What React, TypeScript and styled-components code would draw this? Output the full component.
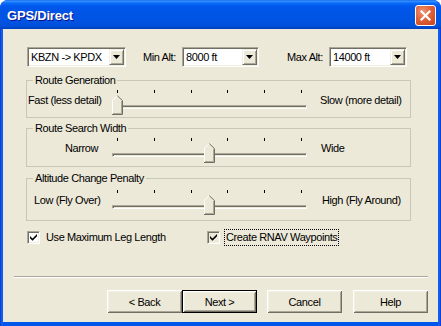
import React from "react";
import styled, { createGlobalStyle } from "styled-components";

const GlobalStyle = createGlobalStyle`
  html, body {
    margin: 0;
    padding: 0;
    background: #ffffff;
  }
  body {
    font-family: "Liberation Sans", Arial, sans-serif;
    font-size: 11px;
    letter-spacing: -0.4px;
    color: #000;
  }
`;

const Window = styled.div`
  width: 441px;
  height: 326px;
  display: flex;
  flex-direction: column;
  background: linear-gradient(to right, #0831d9 0, #166aee 2px, #0055ea 3px, #0055ea 438px, #166aee 439px, #0831d9 441px);
  border-radius: 8px 8px 0 0;
  overflow: hidden;
`;

const TitleBar = styled.div`
  height: 29px;
  flex: none;
  display: flex;
  align-items: flex-start;
  justify-content: space-between;
  padding: 5px 5px 0 7px;
  box-sizing: border-box;
  background: linear-gradient(
    to bottom,
    #0a5fe9 0,
    #3d95ff 1px,
    #0a6df9 3px,
    #0058ee 6px,
    #0055e5 12px,
    #0054e3 20px,
    #0050da 26px,
    #0040be 29px
  );
`;

const Title = styled.span`
  font-weight: bold;
  font-size: 13px;
  letter-spacing: -0.2px;
  line-height: 21px;
  color: #fff;
  text-shadow: 1px 1px #0f1089;
`;

const CloseBtn = styled.div`
  width: 21px;
  height: 21px;
  box-sizing: border-box;
  border: 1px solid #fff;
  border-radius: 3px;
  background: radial-gradient(circle at 35% 30%, #ef9474 0, #e0633c 45%, #c8401a 100%);
  display: flex;
  align-items: center;
  justify-content: center;
`;

const Client = styled.div`
  flex: 1;
  margin: 0 3px 4px;
  background: #ece9d8;
  display: flex;
  flex-direction: column;
  padding: 18px 10px 9px 11px;
`;

const TopRow = styled.div`
  display: flex;
  align-items: center;
  margin-left: 13px;
  height: 20px;
`;

const Field = styled.div<{ $gap: number }>`
  display: flex;
  align-items: center;
  margin-left: ${(p) => p.$gap}px;
`;

const FieldLabel = styled.span<{ $w: number }>`
  width: ${(p) => p.$w}px;
  white-space: nowrap;
`;

const Combo = styled.div<{ $w: number }>`
  width: ${(p) => p.$w}px;
  height: 20px;
  box-sizing: border-box;
  background: #fff;
  border: 1px solid;
  border-color: #aca899 #fff #fff #aca899;
  box-shadow: inset 1px 1px #716f64, inset -1px -1px #f1efe2;
  display: flex;
  align-items: center;
  justify-content: space-between;
  padding: 1px;
`;

const ComboText = styled.span`
  padding-left: 2px;
  line-height: 16px;
  white-space: nowrap;
`;

const DropBtn = styled.div`
  width: 15px;
  height: 16px;
  flex: none;
  box-sizing: border-box;
  background: #ece9d8;
  border: 1px solid;
  border-color: #f1efe2 #716f64 #716f64 #f1efe2;
  box-shadow: inset 1px 1px #fff, inset -1px -1px #aca899;
  display: flex;
  align-items: center;
  justify-content: center;
`;

const Group = styled.fieldset<{ $gap: number; $top: number; $bottom: number }>`
  margin: ${(p) => p.$gap}px 0 0 12px;
  width: 385px;
  box-sizing: border-box;
  padding: ${(p) => p.$top}px 0 ${(p) => p.$bottom}px 0;
  border: 1px solid #c9c7b8;
  min-inline-size: 0;
`;

const Legend = styled.legend`
  margin-left: 6px;
  padding: 0 2px;
  line-height: 13px;
`;

const SliderRow = styled.div`
  display: grid;
  grid-template-columns: 85px 195px 1fr;
  align-items: start;
`;

const SideLabel = styled.span<{ $indent: number }>`
  margin-top: 4px;
  margin-left: ${(p) => p.$indent}px;
  line-height: 13px;
  white-space: nowrap;
`;

const SliderBox = styled.div`
  position: relative;
  width: 195px;
  height: 25px;
`;

const Ticks = styled.div`
  display: flex;
  justify-content: space-between;
  padding: 0 5px;
  height: 3px;
`;

const Tick = styled.span`
  width: 1px;
  height: 3px;
  background: #000;
`;

const Rail = styled.div`
  margin-top: 12px;
  height: 4px;
  box-sizing: border-box;
  border: 1px solid;
  border-color: #aca899 #fff #fff #aca899;
  background: #ece9d8;
  box-shadow: inset 1px 1px #716f64;
`;

const Thumb = styled.svg`
  position: absolute;
  top: 5px;
`;

const CheckRow = styled.div`
  margin: 8px 0 0 13px;
  display: grid;
  grid-template-columns: 180px auto;
  height: 17px;
  align-items: center;
`;

const CheckItem = styled.div`
  display: flex;
  align-items: center;
  gap: 4px;
`;

const Box = styled.div<{ $shade?: boolean }>`
  width: 13px;
  height: 13px;
  box-sizing: border-box;
  border: 1px solid;
  border-color: #aca899 #fff #fff #aca899;
  box-shadow: inset 1px 1px #716f64, inset -1px -1px #f1efe2;
  background: ${(p) => (p.$shade ? "#ece9d8" : "#fff")};
  display: flex;
  align-items: center;
  justify-content: center;
`;

const CheckLabel = styled.span<{ $focus?: boolean }>`
  padding: 1px 1px;
  line-height: 13px;
  border: 1px dotted ${(p) => (p.$focus ? "#000" : "transparent")};
  white-space: nowrap;
`;

const Separator = styled.div`
  margin-top: 30px;
  height: 2px;
  box-sizing: border-box;
  border-top: 1px solid #aca899;
  border-bottom: 1px solid #fff;
`;

const ButtonRow = styled.div`
  margin-top: 12px;
  display: flex;
  justify-content: flex-end;
`;

const Button = styled.div<{ $gap?: number; $default?: boolean }>`
  width: 75px;
  height: 23px;
  margin-left: ${(p) => p.$gap ?? 0}px;
  box-sizing: border-box;
  background: #ece9d8;
  display: flex;
  align-items: center;
  justify-content: center;
  border: ${(p) => (p.$default ? "1px solid #000" : "none")};
  box-shadow: inset 1px 1px #fff, inset -1px -1px #716f64, inset 2px 2px #f1efe2, inset -2px -2px #aca899;
`;

const Arrow = () => (
  <svg width="7" height="4" viewBox="0 0 7 4">
    <polygon points="0,0 7,0 3.5,4" fill="#000" />
  </svg>
);

const Check = () => (
  <svg width="7" height="7" viewBox="0 0 7 7">
    <path d="M0 2 L2.5 4.5 L7 0 V2.2 L2.5 6.7 L0 4.2 Z" fill="#000" />
  </svg>
);

type SliderProps = { value: number };

const Slider = ({ value }: SliderProps) => (
  <SliderBox>
    <Ticks>
      {[0, 1, 2, 3, 4, 5].map((i) => (
        <Tick key={i} />
      ))}
    </Ticks>
    <Rail />
    <Thumb width="11" height="20" viewBox="0 0 11 20" style={{ left: Math.round(value * 184) }}>
      <polygon points="0,5 5,0 10,5 10,19 0,19" fill="#ece9d8" />
      <path d="M0.5 19 V5.3 L5.3 0.5" stroke="#fff" fill="none" />
      <path d="M5.3 0.7 L10.5 5.6 V19.5 H0" stroke="#716f64" fill="none" />
      <path d="M9.5 5.9 V18.5 H1" stroke="#aca899" fill="none" />
    </Thumb>
  </SliderBox>
);

export default function App() {
  return (
    <>
      <GlobalStyle />
      <Window>
        <TitleBar>
          <Title>GPS/Direct</Title>
          <CloseBtn>
            <svg width="11" height="11" viewBox="0 0 11 11">
              <path d="M1.5 1.5 L9.5 9.5 M9.5 1.5 L1.5 9.5" stroke="#fff" strokeWidth="2.2" strokeLinecap="square" />
            </svg>
          </CloseBtn>
        </TitleBar>
        <Client>
          <TopRow>
            <Combo $w={99}>
              <ComboText>KBZN -&gt; KPDX</ComboText>
              <DropBtn>
                <Arrow />
              </DropBtn>
            </Combo>
            <Field $gap={17}>
              <FieldLabel $w={39}>Min Alt:</FieldLabel>
              <Combo $w={77}>
                <ComboText>8000 ft</ComboText>
                <DropBtn>
                  <Arrow />
                </DropBtn>
              </Combo>
            </Field>
            <Field $gap={28}>
              <FieldLabel $w={42}>Max Alt:</FieldLabel>
              <Combo $w={78}>
                <ComboText>14000 ft</ComboText>
                <DropBtn>
                  <Arrow />
                </DropBtn>
              </Combo>
            </Field>
          </TopRow>

          <Group $gap={7} $top={3} $bottom={2}>
            <Legend>Route Generation</Legend>
            <SliderRow>
              <SideLabel $indent={1}>Fast (less detail)</SideLabel>
              <Slider value={0} />
              <SideLabel $indent={13}>Slow (more detail)</SideLabel>
            </SliderRow>
          </Group>

          <Group $gap={4} $top={3} $bottom={3}>
            <Legend>Route Search Width</Legend>
            <SliderRow>
              <SideLabel $indent={38}>Narrow</SideLabel>
              <Slider value={0.5} />
              <SideLabel $indent={14}>Wide</SideLabel>
            </SliderRow>
          </Group>

          <Group $gap={5} $top={5} $bottom={5}>
            <Legend>Altitude Change Penalty</Legend>
            <SliderRow>
              <SideLabel $indent={7}>Low (Fly Over)</SideLabel>
              <Slider value={0.5} />
              <SideLabel $indent={15}>High (Fly Around)</SideLabel>
            </SliderRow>
          </Group>

          <CheckRow>
            <CheckItem>
              <Box>
                <Check />
              </Box>
              <CheckLabel>Use Maximum Leg Length</CheckLabel>
            </CheckItem>
            <CheckItem>
              <Box $shade>
                <Check />
              </Box>
              <CheckLabel $focus>Create RNAV Waypoints</CheckLabel>
            </CheckItem>
          </CheckRow>

          <Separator />

          <ButtonRow>
            <Button>&lt; Back</Button>
            <Button $default>Next &gt;</Button>
            <Button $gap={10}>Cancel</Button>
            <Button $gap={11}>Help</Button>
          </ButtonRow>
        </Client>
      </Window>
    </>
  );
}
